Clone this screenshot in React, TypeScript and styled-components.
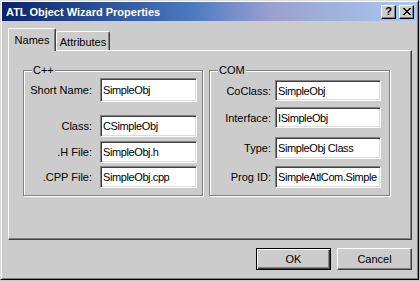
import React from 'react';
import styled, { createGlobalStyle } from 'styled-components';

const Global = createGlobalStyle`
  html, body { margin: 0; padding: 0; background: #cccccc; }
  body { font-family: "Liberation Sans", Arial, sans-serif; font-size: 11px; color: #000; }
  * { box-sizing: border-box; }
`;

const Window = styled.div`
  width: 419px;
  height: 280px;
  background: #cccccc;
  border: 1px solid;
  border-color: #dcdcdc #000 #000 #dcdcdc;
  box-shadow: inset 1px 1px #fff, inset -1px -1px #808080;
  padding: 1px;
  display: flex;
  flex-direction: column;
`;

const TitleBar = styled.div`
  height: 19px;
  flex: none;
  background: linear-gradient(to right, #0a246a 0%, #4a78c0 45%, #9aa0d0 65%, #a6caf0 100%);
  display: flex;
  align-items: center;
  padding: 0 3px 0 3px;
`;

const Title = styled.div`
  flex: 1;
  color: #fff;
  font-weight: bold;
  font-size: 11px;
  padding-left: 1px;
  white-space: nowrap;
`;

const CaptionButton = styled.div<{ $gap?: number }>`
  width: 15px;
  height: 14px;
  margin-left: ${p => p.$gap ?? 0}px;
  background: #cccccc;
  border: 1px solid;
  border-color: #fff #000 #000 #fff;
  box-shadow: inset -1px -1px #808080;
  display: flex;
  align-items: center;
  justify-content: center;
  font-weight: bold;
  font-size: 11px;
  line-height: 1;
`;

const Body = styled.div`
  flex: 1;
  display: flex;
  flex-direction: column;
  padding: 7px 5px 0 6px;
`;

const TabRow = styled.div`
  display: flex;
  align-items: flex-end;
  height: 23px;
  margin-bottom: -1px;
  position: relative;
  z-index: 1;
`;

const Tab = styled.div<{ $active?: boolean; $w: number }>`
  width: ${p => p.$w}px;
  height: ${p => (p.$active ? 23 : 19)}px;
  margin-bottom: ${p => (p.$active ? 0 : 1)}px;
  padding-top: ${p => (p.$active ? 0 : 2)}px;
  background: #cccccc;
  border-left: 1px solid #fff;
  border-top: 1px solid #fff;
  border-right: 1px solid #404040;
  border-radius: 2px 2px 0 0;
  box-shadow: inset -1px 0 #808080;
  display: flex;
  align-items: center;
  justify-content: center;
  font-size: 11px;
`;

const Panel = styled.div`
  height: 190px;
  border: 1px solid;
  border-color: #fff #404040 #404040 #fff;
  box-shadow: inset -1px -1px #808080;
  padding: 19px 0 0 14px;
  display: flex;
  gap: 6px;
`;

const Group = styled.div<{ $w: number }>`
  position: relative;
  width: ${p => p.$w}px;
  height: 126px;
  border: 1px solid #808080;
  box-shadow: inset 1px 1px #fff, 1px 1px #fff;
  display: flex;
  flex-direction: column;
`;

const GroupLabel = styled.div`
  position: absolute;
  top: -7px;
  left: 8px;
  padding: 0 1px;
  background: #cccccc;
  line-height: 13px;
  font-size: 11px;
`;

const Row = styled.div<{ $mt: number; $h: number; $lw: number; $gap: number; $iw: number }>`
  margin-top: ${p => p.$mt}px;
  height: ${p => p.$h}px;
  display: grid;
  grid-template-columns: ${p => p.$lw}px ${p => p.$iw}px;
  column-gap: ${p => p.$gap}px;
  align-items: center;
`;

const Label = styled.div`
  text-align: right;
  white-space: nowrap;
  font-size: 11px;
`;

const Field = styled.div<{ $h: number }>`
  height: ${p => p.$h}px;
  background: #fff;
  border: 1px solid;
  border-color: #808080 #fff #fff #808080;
  box-shadow: inset 1px 1px #404040, inset -1px -1px #dcdcdc;
  padding: 0 1px 0 2px;
  display: flex;
  align-items: center;
  overflow: hidden;
  white-space: nowrap;
  font-size: 11px;
  letter-spacing: -0.4px;
`;

const ButtonRow = styled.div`
  display: flex;
  justify-content: flex-end;
  gap: 6px;
  margin-top: 8px;
`;

const Button = styled.div<{ $default?: boolean }>`
  width: 75px;
  height: 22px;
  background: #cccccc;
  display: flex;
  align-items: center;
  justify-content: center;
  font-size: 11px;
  border: 1px solid;
  border-color: ${p => (p.$default ? '#000' : '#fff #404040 #404040 #fff')};
  box-shadow: ${p =>
    p.$default
      ? 'inset 1px 1px #fff, inset -1px -1px #404040, inset -2px -2px #808080'
      : 'inset -1px -1px #808080'};
`;

type F = { label: string; value: string; mt: number; h: number };

const cpp: F[] = [
  { label: 'Short Name:', value: 'SimpleObj', mt: 7, h: 24 },
  { label: 'Class:', value: 'CSimpleObj', mt: 13, h: 22 },
  { label: '.H File:', value: 'SimpleObj.h', mt: 4, h: 22 },
  { label: '.CPP File:', value: 'SimpleObj.cpp', mt: 3, h: 22 },
];

const com: F[] = [
  { label: 'CoClass:', value: 'SimpleObj', mt: 9, h: 21 },
  { label: 'Interface:', value: 'ISimpleObj', mt: 6, h: 21 },
  { label: 'Type:', value: 'SimpleObj Class', mt: 9, h: 22 },
  { label: 'Prog ID:', value: 'SimpleAtlCom.Simple', mt: 7, h: 22 },
];

export default function App() {
  return (
    <>
      <Global />
      <Window>
        <TitleBar>
          <Title>ATL Object Wizard Properties</Title>
          <CaptionButton>?</CaptionButton>
          <CaptionButton $gap={3}>
            <svg width="8" height="7" viewBox="0 0 8 7" shapeRendering="crispEdges">
              <path d="M0 0h2v1h-2zM6 0h2v1h-2zM1 1h2v1h-2zM5 1h2v1h-2zM2 2h4v1h-4zM3 3h2v1h-2zM2 4h4v1h-4zM1 5h2v1h-2zM5 5h2v1h-2zM0 6h2v1h-2zM6 6h2v1h-2z" fill="#000" />
            </svg>
          </CaptionButton>
        </TitleBar>
        <Body>
          <TabRow>
            <Tab $active $w={48}>Names</Tab>
            <Tab $w={54}>Attributes</Tab>
          </TabRow>
          <Panel>
            <Group $w={180}>
              <GroupLabel>C++</GroupLabel>
              {cpp.map(f => (
                <Row key={f.label} $mt={f.mt} $h={f.h} $lw={68} $gap={8} $iw={97}>
                  <Label>{f.label}</Label>
                  <Field $h={f.h}>{f.value}</Field>
                </Row>
              ))}
            </Group>
            <Group $w={181}>
              <GroupLabel>COM</GroupLabel>
              {com.map(f => (
                <Row key={f.label} $mt={f.mt} $h={f.h} $lw={61} $gap={4} $iw={106}>
                  <Label>{f.label}</Label>
                  <Field $h={f.h}>{f.value}</Field>
                </Row>
              ))}
            </Group>
          </Panel>
          <ButtonRow>
            <Button $default>OK</Button>
            <Button>Cancel</Button>
          </ButtonRow>
        </Body>
      </Window>
    </>
  );
}
